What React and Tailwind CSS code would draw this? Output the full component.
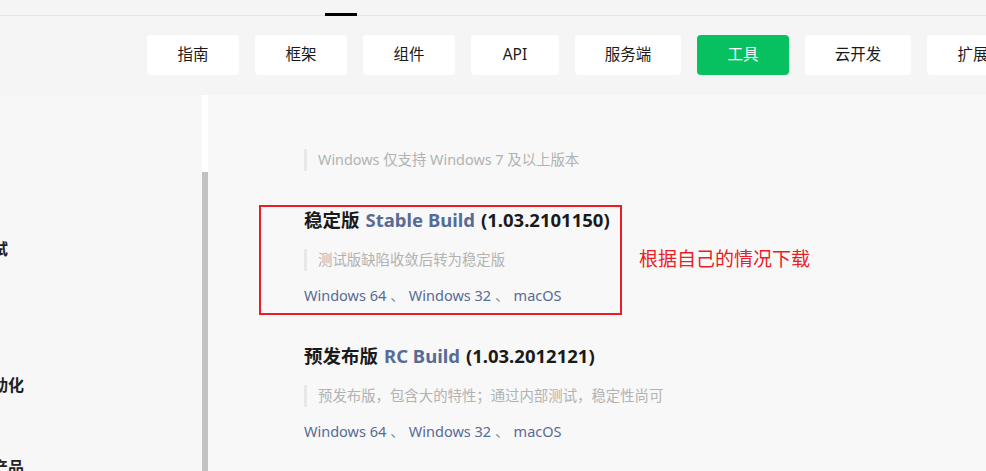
import React from 'react';

const navItems = [
  { label: '指南', w: 'w-[92px]' },
  { label: '框架', w: 'w-[92px]' },
  { label: '组件', w: 'w-[92px]' },
  { label: 'API', w: 'w-[88px]' },
  { label: '服务端', w: 'w-[106px]' },
  { label: '工具', w: 'w-[92px]', active: true },
  { label: '云开发', w: 'w-[106px]' },
  { label: '扩展', w: 'w-[92px]' },
];

const Quote = ({ children }) => (
  <div className="flex h-[22px] items-center border-l-[3px] border-[#e8e8e8] pl-[11px] text-[14.4px] text-[#b2b2b2]">
    {children}
  </div>
);

const Links = () => (
  <div className="flex h-[20px] items-center text-[14.5px] text-[#576b95]">
    <span>Windows 64</span>
    <span className="mx-[4px] text-[#888]">、</span>
    <span>Windows 32</span>
    <span className="mx-[4px] text-[#888]">、</span>
    <span>macOS</span>
  </div>
);

const Heading = ({ cn, en, ver }) => (
  <h2 className="flex h-[24px] items-center text-[18.5px] font-bold text-[#1a1a1a]">
    <span>{cn}</span>
    <span className="ml-[6px] text-[#576b95]">{en}</span>
    <span className="ml-[6px]">{ver}</span>
  </h2>
);

const App = () => {
  return (
    <div
      className="h-[471px] w-[986px] overflow-hidden bg-[#f8f8f8]"
      style={{ fontFamily: '"Noto Sans", "Noto Sans CJK SC", sans-serif' }}
    >
      {/* header */}
      <div className="bg-[#f5f5f5]">
        <div className="relative h-[16px] border-b border-[#e5e5e5]">
          <div className="absolute left-[325px] top-[13px] h-[3px] w-[32px] bg-black" />
        </div>
        <div className="flex h-[79px] gap-[16px] pl-[147px] pt-[19px]">
          {navItems.map((item) => (
            <div
              key={item.label}
              className={`flex h-[40px] shrink-0 items-center justify-center rounded-[4px] text-[15.5px] ${item.w} ${
                item.active ? 'bg-[#07c160] text-white' : 'bg-white text-[#1a1a1a]'
              }`}
            >
              {item.label}
            </div>
          ))}
        </div>
      </div>

      <div className="flex h-[376px]">
        {/* sidebar */}
        <div className="w-[202px] overflow-hidden bg-[#f7f7f7] pt-[144px] text-[16px] font-bold text-[#222]">
          <div className="-ml-[24px] h-[20px] leading-[20px]">测试</div>
          <div className="-ml-[24px] mt-[116px] h-[20px] leading-[20px]">自动化</div>
          <div className="-ml-[24px] mt-[62px] h-[20px] leading-[20px]">云产品</div>
        </div>
        <div className="flex w-[6px] flex-col bg-white">
          <div className="h-[77px]" />
          <div className="flex-1 bg-[#c1c1c1]" />
        </div>

        {/* content */}
        <div className="relative flex-1 pl-[96px] pt-[54px]">
          <Quote>Windows 仅支持 Windows 7 及以上版本</Quote>

          <div className="mt-[37px]">
            <Heading cn="稳定版" en="Stable Build" ver="(1.03.2101150)" />
          </div>
          <div className="mt-[17px]">
            <Quote>测试版缺陷收敛后转为稳定版</Quote>
          </div>
          <div className="mt-[15px]">
            <Links />
          </div>

          <div className="mt-[38px]">
            <Heading cn="预发布版" en="RC Build" ver="(1.03.2012121)" />
          </div>
          <div className="mt-[17px]">
            <Quote>预发布版，包含大的特性；通过内部测试，稳定性尚可</Quote>
          </div>
          <div className="mt-[15px]">
            <Links />
          </div>

          {/* annotation */}
          <div className="absolute left-[51px] top-[110px] h-[110px] w-[363px] border-2 border-[#ec1c24]" />
          <div className="absolute left-[431px] top-[150px] text-[19px] text-[#ec1c24]">根据自己的情况下载</div>
        </div>
      </div>
    </div>
  );
};

export default App;
